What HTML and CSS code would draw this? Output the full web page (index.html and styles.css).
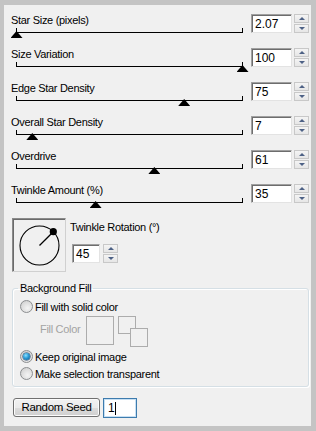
FILE: index.html
```html
<!DOCTYPE html>
<html>
<head>
<meta charset="utf-8">
<link rel="stylesheet" href="styles.css">
</head>
<body>
<div class="panel">
  <div class="row">
    <div class="ctl">
      <div class="lbl">Star Size (pixels)</div>
      <div class="slider"><span class="thumb" style="--v:0"></span></div>
    </div>
    <div class="spin"><div class="num">2.07</div><div class="btns"><span class="up"></span><span class="dn"></span></div></div>
  </div>
  <div class="row">
    <div class="ctl">
      <div class="lbl">Size Variation</div>
      <div class="slider"><span class="thumb" style="--v:1"></span></div>
    </div>
    <div class="spin"><div class="num">100</div><div class="btns"><span class="up"></span><span class="dn"></span></div></div>
  </div>
  <div class="row">
    <div class="ctl">
      <div class="lbl">Edge Star Density</div>
      <div class="slider"><span class="thumb" style="--v:0.742"></span></div>
    </div>
    <div class="spin"><div class="num">75</div><div class="btns"><span class="up"></span><span class="dn"></span></div></div>
  </div>
  <div class="row">
    <div class="ctl">
      <div class="lbl">Overall Star Density</div>
      <div class="slider"><span class="thumb" style="--v:0.07"></span></div>
    </div>
    <div class="spin"><div class="num">7</div><div class="btns"><span class="up"></span><span class="dn"></span></div></div>
  </div>
  <div class="row">
    <div class="ctl">
      <div class="lbl">Overdrive</div>
      <div class="slider"><span class="thumb" style="--v:0.61"></span></div>
    </div>
    <div class="spin"><div class="num">61</div><div class="btns"><span class="up"></span><span class="dn"></span></div></div>
  </div>
  <div class="row">
    <div class="ctl">
      <div class="lbl">Twinkle Amount (%)</div>
      <div class="slider"><span class="thumb" style="--v:0.35"></span></div>
    </div>
    <div class="spin"><div class="num">35</div><div class="btns"><span class="up"></span><span class="dn"></span></div></div>
  </div>

  <div class="twinkle">
    <div class="dial">
      <svg width="52" height="52" viewBox="0 0 52 52">
        <circle cx="26.5" cy="26.5" r="19.5" fill="none" stroke="#000" stroke-width="1.1"/>
        <line x1="26.5" y1="26.5" x2="40.3" y2="12.7" stroke="#000" stroke-width="1.3"/>
        <circle cx="40.3" cy="12.7" r="3.6" fill="#000"/>
      </svg>
    </div>
    <div class="rot">
      <div class="lbl">Twinkle Rotation (°)</div>
      <div class="spin small"><div class="num">45</div><div class="btns"><span class="up"></span><span class="dn"></span></div></div>
    </div>
  </div>

  <fieldset class="group">
    <legend>Background Fill</legend>
    <div class="opt first"><span class="radio"></span><span>Fill with solid color</span></div>
    <div class="fillrow">
      <span class="fc-lbl">Fill Color</span>
      <span class="swatch"></span>
      <span class="pair"><span class="sq a"></span><span class="sq b"></span></span>
    </div>
    <div class="opt"><span class="radio on"></span><span>Keep original image</span></div>
    <div class="opt"><span class="radio"></span><span>Make selection transparent</span></div>
  </fieldset>

  <div class="seedrow">
    <div class="button">Random Seed</div>
    <div class="seed">1<span class="caret"></span></div>
  </div>
</div>
</body>
</html>
```
FILE: styles.css
```css
* { box-sizing: border-box; }
html, body { margin: 0; padding: 0; }
body {
  background: #c4c4c4;
  width: 316px;
  height: 431px;
  padding: 5px 5px 5px 4px;
  font-family: "Liberation Sans", Arial, sans-serif;
  font-size: 11px;
  letter-spacing: -0.3px;
  color: #000;
}
.panel {
  background: #f0f0f0;
  height: 421px;
  padding: 8px 2px 0 7px;
}
.row {
  display: flex;
  height: 34px;
}
.ctl { flex: 1; }
.lbl {
  line-height: 13px;
  height: 14px;
  padding-top: 1px;
  white-space: nowrap;
}
.slider {
  position: relative;
  margin-left: 5px;
  width: 227px;
  height: 12px;
}
.slider::before {
  content: "";
  position: absolute;
  left: 0; right: 0; top: 5px;
  height: 1px;
  background: #000;
}
.slider::after {
  content: "";
  position: absolute;
  left: 0; right: 0; top: 1px;
  height: 4px;
  border-left: 1px solid #000;
  border-right: 1px solid #000;
}
.thumb {
  position: absolute;
  top: 4px;
  left: calc(var(--v) * 226px - 5.5px);
  width: 12px;
  height: 7px;
  background: #000;
  clip-path: polygon(50% 0, 100% 100%, 0 100%);
}
.spin {
  display: flex;
  margin-top: 1px;
  height: 19px;
}
.num {
  width: 41px;
  height: 19px;
  background: #fff;
  border: 1px solid;
  border-color: #a0a0a0 #e3e3e3 #e3e3e3 #a0a0a0;
  box-shadow: inset 1px 1px 0 #6d6d6d;
  padding: 2px 0 0 3px;
  line-height: 14px;
  font-size: 12px;
  letter-spacing: 0;
  margin-right: 2px;
}
.btns {
  width: 15px;
  display: flex;
  flex-direction: column;
  gap: 1px;
}
.btns span {
  flex: 1;
  position: relative;
  border: 1px solid #c8c8c8;
  background: linear-gradient(#f4f4f4, #e6e6e6);
}
.btns span::after {
  content: "";
  position: absolute;
  left: 4px;
  top: 2px;
  border-left: 3px solid transparent;
  border-right: 3px solid transparent;
}
.btns .up::after { border-bottom: 3px solid #4d6185; }
.btns .dn::after { border-top: 3px solid #4d6185; }

.twinkle {
  display: flex;
  margin-top: 1px;
}
.dial {
  width: 54px;
  height: 54px;
  margin-left: 1px;
  border: 1px solid;
  border-color: #8a8a8a #d0d0d0 #d0d0d0 #8a8a8a;
  box-shadow: inset 1px 1px 0 #6a6a6a;
}
.dial svg { display: block; }
.rot {
  margin-left: 4px;
  padding-top: 3px;
}
.rot .lbl { padding-top: 0; height: 13px; }
.rot .spin {
  margin-top: 10px;
  margin-left: 2px;
}
.spin.small .num { width: 28px; margin-right: 3px; }

.group {
  margin: 10px 0 0 1px;
  padding: 0 5px 4px 5px;
  border: 1px solid #d5dfe5;
  border-radius: 3px;
  box-shadow: inset 1px 1px 0 #fff, 1px 1px 0 #fff;
  min-width: 0;
}
.group legend {
  padding: 0 2px;
  line-height: 13px;
}
.opt {
  display: flex;
  align-items: center;
  height: 17px;
  margin-left: 2px;
  white-space: nowrap;
}
.opt.first { margin-top: 3px; }
.radio {
  position: relative;
  width: 13px;
  height: 13px;
  margin-right: 2px;
  border-radius: 50%;
  border: 1px solid #8c8e90;
  background: radial-gradient(circle at 60% 65%, #f4f4f4 0, #e2e2e2 45%, #c9c9c9 100%);
}
.radio.on::after {
  content: "";
  position: absolute;
  left: 2px; top: 2px;
  width: 7px; height: 7px;
  border-radius: 50%;
  background: radial-gradient(circle at 40% 35%, #8ee0ff 0, #2a9bd6 45%, #0b4f87 100%);
  box-shadow: 0 0 0 0.5px #1f3f63;
}
.fillrow {
  display: flex;
  align-items: flex-start;
  height: 33px;
  margin-left: 22px;
}
.fc-lbl {
  color: #a3a3a3;
  width: 46px;
  line-height: 13px;
  margin-top: 8px;
}
.swatch {
  width: 28px;
  height: 29px;
  margin-top: 1px;
  border: 1px solid #acacac;
}
.pair {
  position: relative;
  width: 30px;
  height: 31px;
  margin: 1px 0 0 4px;
}
.sq {
  position: absolute;
  width: 18px;
  height: 18px;
  border: 1px solid #acacac;
  background: #f0f0f0;
}
.sq.a { left: 0; top: 0; }
.sq.b { left: 12px; top: 12px; height: 19px; }

.seedrow {
  display: flex;
  margin-top: 11px;
  margin-left: 2px;
}
.button {
  width: 87px;
  height: 19px;
  border: 1px solid #707070;
  border-radius: 3px;
  background: linear-gradient(#f2f2f2 0, #ebebeb 50%, #dddddd 50%, #cfcfcf 100%);
  box-shadow: inset 0 0 0 1px #fcfcfc;
  text-align: center;
  line-height: 17px;
  font-size: 11.5px;
}
.seed {
  width: 34px;
  height: 20px;
  margin-left: 3px;
  background: #fff;
  border: 1px solid #3d7bad;
  box-shadow: inset 0 0 0 1px #c7e0f4;
  padding: 2px 0 0 4px;
  line-height: 14px;
  font-size: 12px;
  display: flex;
  align-items: flex-start;
}
.caret {
  width: 1px;
  height: 13px;
  background: #000;
  margin: 1px 0 0 1px;
}
```
